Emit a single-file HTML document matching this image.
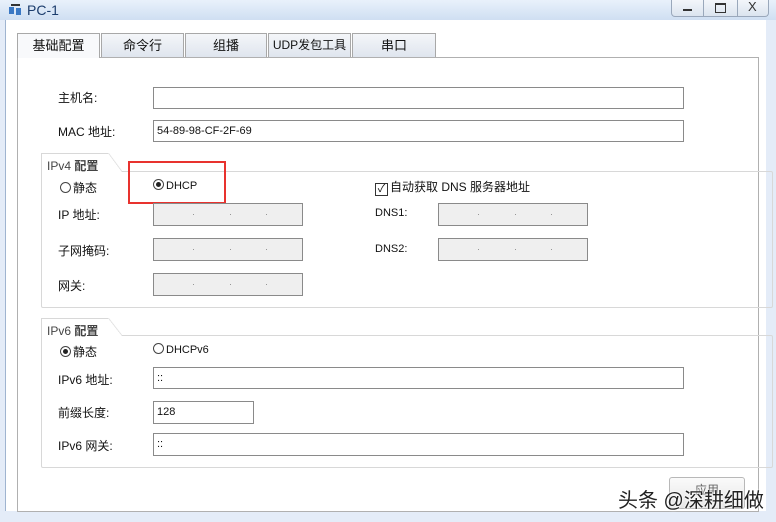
<!DOCTYPE html>
<html><head><meta charset="utf-8"><style>
body{margin:0;width:776px;height:522px;overflow:hidden;background:#e4ecf8;font-family:"Liberation Sans","Noto Sans CJK SC",sans-serif;font-size:12px;color:#111;position:relative}
.a{position:absolute}
.title{left:0;top:0;width:776px;height:20px;background:linear-gradient(#e9f1fb,#cfdff2)}
.win{left:5px;top:20px;width:760px;height:491px;background:#fff;border-left:1px solid #9fb4d0}
.tab{top:33px;height:23px;border:1px solid #a8a8a8;border-bottom:none;background:linear-gradient(#f4f6f9,#dfe5ee);text-align:center;line-height:23px;font-size:13px}
.panel{left:17px;top:57px;width:740px;height:453px;border:1px solid #b0b0b0;background:#fff}
.inp{border:1px solid #8a8a8a;background:#fff;height:20px;line-height:20px;padding-left:3px;box-sizing:border-box;font-size:11px}
.ip{background:#efefef;height:23px;width:150px;color:#888;font-size:9px;letter-spacing:0}
.grp{border:1px solid #d8d8d8;border-radius:2px}
.lbl{font-size:12px}
.rad{width:11px;height:11px;border:1px solid #444;border-radius:50%;box-sizing:border-box;display:inline-block;vertical-align:-1px;margin-right:2px;background:#fff;position:relative}
.rad.on::after{content:"";position:absolute;left:2px;top:2px;width:5px;height:5px;border-radius:50%;background:#222}
</style></head><body>
<div class="a title"></div>
<div class="a" style="left:8px;top:3px;width:14px;height:14px;">
<svg width="14" height="14"><rect x="1" y="4" width="5" height="7" fill="#3a78c4"/><rect x="8" y="5" width="5" height="7" fill="#3a78c4"/><rect x="3" y="1" width="9" height="2" fill="#333"/></svg></div>
<div class="a" style="left:27px;top:2px;font-size:14px;color:#1b3c6c">PC-1</div>
<div class="a" style="left:671px;top:0;width:96px;height:16px;border:1px solid #9aa8bb;border-top:none;border-radius:0 0 4px 4px;background:linear-gradient(#f3f6fa,#dbe4ef)"></div>
<div class="a" style="left:703px;top:0;width:1px;height:16px;background:#9aa8bb"></div>
<div class="a" style="left:737px;top:0;width:1px;height:16px;background:#9aa8bb"></div>
<div class="a" style="left:683px;top:9px;width:9px;height:2px;background:#333"></div>
<div class="a" style="left:715px;top:3px;width:9px;height:7px;border:1px solid #333;border-top-width:2px"></div>
<div class="a" style="left:748px;top:-1px;font-size:13px;color:#333">X</div>
<div class="a win"></div>
<div class="a panel"></div>
<div class="a tab" style="left:17px;width:81px;background:#f8f9fb;height:24px">基础配置</div>
<div class="a tab" style="left:101px;width:81px">命令行</div>
<div class="a tab" style="left:185px;width:80px">组播</div>
<div class="a tab" style="left:268px;width:81px;font-size:12px">UDP发包工具</div>
<div class="a tab" style="left:352px;width:82px">串口</div>

<div class="a lbl" style="left:58px;top:89px">主机名:</div>
<div class="a inp" style="left:153px;top:87px;width:531px;height:22px"></div>
<div class="a lbl" style="left:58px;top:123px">MAC 地址:</div>
<div class="a inp" style="left:153px;top:120px;width:531px;height:22px">54-89-98-CF-2F-69</div>

<div class="a grp" style="left:41px;top:171px;width:730px;height:135px"></div>
<div class="a" style="left:41px;top:153px;width:68px;height:19px;border:1px solid #d8d8d8;border-bottom:none;border-right:none;background:#fff"></div>
<div class="a" style="left:108px;top:153px;width:14px;height:19px;background:linear-gradient(to top right,#fff 49%,#d8d8d8 50%,#fff 55%)"></div>
<div class="a" style="left:47px;top:157px;color:#444">IPv4 <b>配置</b></div>
<div class="a" style="left:60px;top:179px"><span class="rad"></span>静态</div>
<div class="a" style="left:153px;top:179px;font-size:11px"><span class="rad on"></span>DHCP</div>
<div class="a" style="left:128px;top:161px;width:94px;height:39px;border:2px solid #e8322e"></div>
<div class="a" style="left:375px;top:178px"><span style="display:inline-block;width:11px;height:11px;border:1px solid #333;vertical-align:-1px;margin-right:2px;font-size:11px;line-height:10px;text-align:center">✓</span>自动获取 DNS 服务器地址</div>

<div class="a lbl" style="left:58px;top:206px">IP 地址:</div>
<div class="a lbl" style="left:58px;top:242px">子网掩码:</div>
<div class="a lbl" style="left:58px;top:277px">网关:</div>
<div class="a inp ip" style="left:153px;top:203px"><span style="position:absolute;left:38px">·</span><span style="position:absolute;left:75px">·</span><span style="position:absolute;left:111px">·</span></div>
<div class="a inp ip" style="left:153px;top:238px"><span style="position:absolute;left:38px">·</span><span style="position:absolute;left:75px">·</span><span style="position:absolute;left:111px">·</span></div>
<div class="a inp ip" style="left:153px;top:273px"><span style="position:absolute;left:38px">·</span><span style="position:absolute;left:75px">·</span><span style="position:absolute;left:111px">·</span></div>
<div class="a lbl" style="left:375px;top:207px;font-size:11px">DNS1:</div>
<div class="a lbl" style="left:375px;top:243px;font-size:11px">DNS2:</div>
<div class="a inp ip" style="left:438px;top:203px"><span style="position:absolute;left:38px">·</span><span style="position:absolute;left:75px">·</span><span style="position:absolute;left:111px">·</span></div>
<div class="a inp ip" style="left:438px;top:238px"><span style="position:absolute;left:38px">·</span><span style="position:absolute;left:75px">·</span><span style="position:absolute;left:111px">·</span></div>

<div class="a grp" style="left:41px;top:335px;width:730px;height:131px"></div>
<div class="a" style="left:41px;top:318px;width:68px;height:18px;border:1px solid #d8d8d8;border-bottom:none;border-right:none;background:#fff"></div>
<div class="a" style="left:108px;top:318px;width:14px;height:18px;background:linear-gradient(to top right,#fff 49%,#d8d8d8 50%,#fff 55%)"></div>
<div class="a" style="left:47px;top:322px;color:#444">IPv6 <b>配置</b></div>
<div class="a" style="left:60px;top:343px"><span class="rad on"></span>静态</div>
<div class="a" style="left:153px;top:343px;font-size:11px"><span class="rad"></span>DHCPv6</div>
<div class="a lbl" style="left:58px;top:371px">IPv6 地址:</div>
<div class="a inp" style="left:153px;top:367px;width:531px;height:22px">::</div>
<div class="a lbl" style="left:58px;top:404px">前缀长度:</div>
<div class="a inp" style="left:153px;top:401px;width:101px;height:23px">128</div>
<div class="a lbl" style="left:58px;top:437px">IPv6 网关:</div>
<div class="a inp" style="left:153px;top:433px;width:531px;height:23px">::</div>

<div class="a" style="left:669px;top:477px;width:74px;height:30px;border:1px solid #b8b8b8;border-radius:3px;background:linear-gradient(#fafafa,#e6e6e6);text-align:center;line-height:24px;color:#666">应用</div>
<div class="a" style="left:618px;top:484px;font-size:20px;color:#222;text-shadow:0 0 2px #fff,0 0 2px #fff">头条 @深耕细做</div>
</body></html>
